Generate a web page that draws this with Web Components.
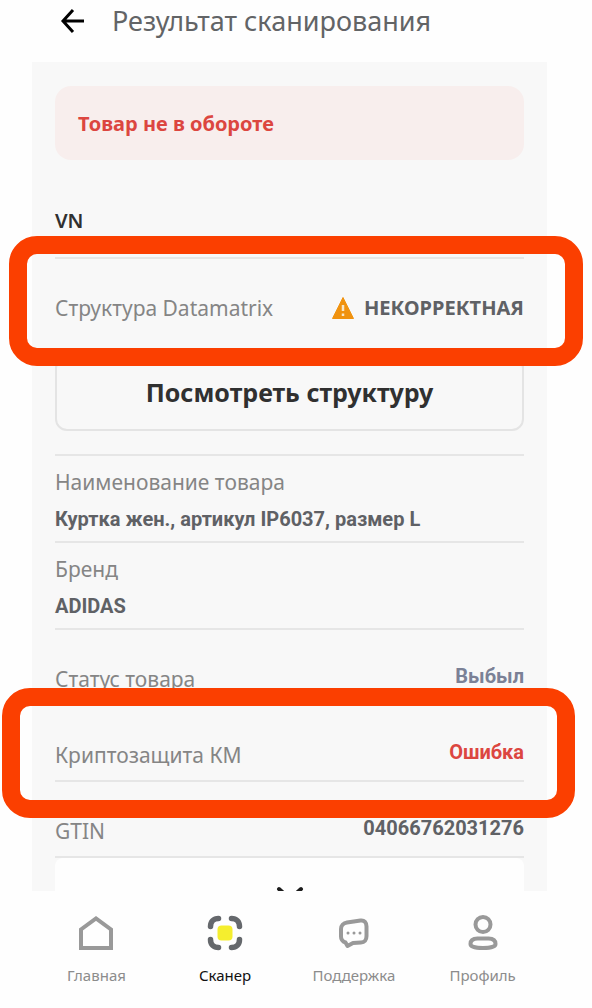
<!DOCTYPE html>
<html lang="ru">
<head>
<meta charset="utf-8">
<meta name="viewport" content="width=device-width, initial-scale=1">
<title>Результат сканирования</title>
<style>
  body {
    margin: 0;
    background: #fefefe;
    font-family: "Noto Sans", "Open Sans", sans-serif;
    --line: #e6e6e6;
    --muted: #858585;
    --strong: #5f6165;
    --danger: #dc4640;
    --accent: #fb3f00;
  }
</style>
</head>
<body>

<scan-page>
  <page-header slot="header">Результат сканирования</page-header>

  <status-alert>Товар не в обороте</status-alert>
  <section-title>VN</section-title>
  <check-row marked>
    Структура Datamatrix
    <warning-icon slot="icon"></warning-icon>
    <span slot="value">НЕКОРРЕКТНАЯ</span>
  </check-row>
  <outline-button>Посмотреть структуру</outline-button>
  <stacked-field>
    Наименование товара
    <span slot="value">Куртка жен., артикул IP6037, размер L</span>
  </stacked-field>
  <stacked-field>
    Бренд
    <span slot="value">ADIDAS</span>
  </stacked-field>
  <info-row tone="slate">Статус товара<span slot="value">Выбыл</span></info-row>
  <info-row tone="danger" marked>Криптозащита КМ<span slot="value">Ошибка</span></info-row>
  <info-row>GTIN<span slot="value">04066762031276</span></info-row>
  <more-button></more-button>

  <tab-bar slot="footer">
    <tab-item>
      <svg slot="icon" width="36" height="36" viewBox="0 0 36 36" fill="none" stroke="#999" stroke-width="4">
        <path d="M3 33V14.500L18 3.500L33 14.500V33Z"/>
      </svg>
      Главная
    </tab-item>
    <tab-item active>
      <svg slot="icon" width="36" height="36" viewBox="0 0 36 36" fill="none" stroke="#65686c" stroke-width="5.500" stroke-linecap="round">
        <path d="M3.500 11.500C3.500 6.500 6.500 3.500 11.500 3.500M24.500 3.500C29.500 3.500 32.500 6.500 32.500 11.500M32.500 24.500C32.500 29.500 29.500 32.500 24.500 32.500M11.500 32.500C6.500 32.500 3.500 29.500 3.500 24.500"/>
        <rect x="10.500" y="10.500" width="15" height="15" rx="4" fill="#f5ee2e" stroke="none"/>
      </svg>
      Сканер
    </tab-item>
    <tab-item>
      <svg slot="icon" width="36" height="36" viewBox="0 0 36 36" fill="none" stroke="#999" stroke-width="4" stroke-linejoin="round">
        <path d="M11 7.500L24.500 5.500C28.500 5 30.500 7.500 30.500 11.500V21C30.500 25 28.500 27.500 25 27.500L17 28L11.500 31L9.500 27.500C6.500 26.500 5 24.500 5 21.500V14C5 10.500 7.500 8 11 7.500Z"/>
        <path d="M12 18h.01M18 18h.01M24 18h.01" stroke-width="3" stroke-linecap="round"/>
      </svg>
      Поддержка
    </tab-item>
    <tab-item>
      <svg slot="icon" width="36" height="36" viewBox="0 0 36 36" fill="none" stroke="#999" stroke-width="4">
        <circle cx="18" cy="9.500" r="7.500"/>
        <path d="M5.500 29C5.500 25.500 8 23.500 12.500 23.500H23.500C28 23.500 30.500 25.500 30.500 29C30.500 31.500 26 33 18 33C10 33 5.500 31.500 5.500 29Z"/>
      </svg>
      Профиль
    </tab-item>
  </tab-bar>
</scan-page>

<script>
function define(name, html) {
  const template = document.createElement("template");
  template.innerHTML = html;

  window.customElements.define(name, class extends HTMLElement {
    constructor() {
      super();
      this.attachShadow({ mode: "open" });
      this.shadowRoot.appendChild(template.content.cloneNode(true));
    }
  });
}

define("scan-page", `
<style>
  :host {
    display: flex;
    flex-direction: column;
    height: 100vh;
    padding: 0 45px 0 32px;
    box-sizing: border-box;
  }
  main {
    flex: 1;
    min-height: 0;
    padding: 24px 23px 0;
    background: #f8f8f8;
    /* the list is cut at the tab bar, the marks may stick out sideways */
    overflow-x: visible;
    overflow-y: clip;
  }
</style>
<slot name="header"></slot>
<main><slot></slot></main>
<slot name="footer"></slot>
`);

define("page-header", `
<style>
  :host {
    display: flex;
    align-items: center;
    gap: 24px;
    height: 42px;
    padding: 0 24px 20px;
  }
  button {
    display: flex;
    padding: 0;
    border: 0;
    background: none;
  }
  h1 {
    margin: 0;
    font-size: 27px;
    line-height: 32px;
    font-weight: 400;
    color: #626466;
    white-space: nowrap;
  }
</style>
<button type="button" aria-label="Назад">
  <svg width="32" height="32" viewBox="0 0 32 32" fill="none" stroke="#000" stroke-width="3">
    <path d="M28 16H7M17 5L7 16L17 27"/>
  </svg>
</button>
<h1><slot></slot></h1>
`);

define("status-alert", `
<style>
  :host {
    display: block;
    padding: 25px 23px 23px;
    border-radius: 16px;
    background: #f8eeed;
    color: var(--danger);
    font-size: 20px;
    line-height: 26px;
    font-weight: 700;
  }
</style>
<slot></slot>
`);

define("section-title", `
<style>
  :host {
    display: block;
    padding: 48px 0 24px;
    border-bottom: 2px solid var(--line);
  }
  h2 {
    margin: 0;
    font-size: 20px;
    line-height: 25px;
    font-weight: 600;
    color: #303030;
  }
</style>
<h2><slot></slot></h2>
`);

define("check-row", `
<style>
  :host {
    display: flex;
    align-items: center;
    position: relative;
    height: 97px;
    font-size: 21px;
    line-height: 26px;
    color: var(--muted);
  }
  .label {
    flex: 1;
  }
  .value {
    display: flex;
    align-items: center;
    gap: 10px;
    font-size: 20px;
    color: var(--strong);
    font-weight: 700;
  }
  .mark {
    display: none;
  }
  :host([marked]) .mark {
    display: block;
    position: absolute;
    inset: -23px -59px -10px -46px;
    z-index: 1;
    border: 18px solid var(--accent);
    border-radius: 28px;
    pointer-events: none;
  }
</style>
<span class="label"><slot></slot></span>
<span class="value"><slot name="icon"></slot><slot name="value"></slot></span>
<span class="mark"></span>
`);

define("warning-icon", `
<style>
  :host {
    display: flex;
  }
</style>
<svg width="22" height="22" viewBox="0 0 22 22">
  <path d="M11 0.500L21.500 21.500H0.500Z" fill="#f0920f" stroke="#f0920f" stroke-linejoin="round"/>
  <path d="M11 8V14M11 16.500V19" stroke="#f8e6c8" stroke-width="2.500"/>
</svg>
`);

define("outline-button", `
<style>
  :host {
    display: block;
    padding-bottom: 23px;
    border-bottom: 2px solid var(--line);
  }
  button {
    width: 100%;
    padding: 19px 20px 21px;
    border: 2px solid #e4e4e4;
    border-radius: 12px;
    background: none;
    font-family: inherit;
    font-size: 25px;
    line-height: 31px;
    font-weight: 700;
    color: #303030;
  }
</style>
<button type="button"><slot></slot></button>
`);

define("stacked-field", `
<style>
  :host {
    display: flex;
    flex-direction: column;
    gap: 11px;
    padding: 13px 0 9px;
    border-bottom: 2px solid var(--line);
    font-size: 21px;
    line-height: 26px;
    color: var(--muted);
  }
  .value {
    font-family: Roboto, sans-serif;
    font-size: 20px;
    font-weight: 700;
    color: var(--strong);
  }
</style>
<span><slot></slot></span>
<span class="value"><slot name="value"></slot></span>
`);

define("info-row", `
<style>
  :host {
    display: flex;
    justify-content: space-between;
    position: relative;
    padding: 33px 0 12px;
    border-bottom: 2px solid var(--line);
    font-size: 21px;
    line-height: 26px;
    color: var(--muted);
  }
  .label {
    padding-top: 3px;
  }
  .value {
    font-family: Roboto, sans-serif;
    font-size: 20px;
    font-weight: 700;
    color: var(--strong);
  }
  :host([tone="slate"]) .value {
    color: #7b8196;
  }
  :host([tone="danger"]) .value {
    color: var(--danger);
  }
  .mark {
    display: none;
  }
  :host([marked]) .mark {
    display: block;
    position: absolute;
    inset: -18px -51px -38px -53px;
    z-index: 1;
    border: 18px solid var(--accent);
    border-radius: 28px;
    pointer-events: none;
  }
</style>
<span class="label"><slot></slot></span>
<span class="value"><slot name="value"></slot></span>
<span class="mark"></span>
`);

define("more-button", `
<style>
  :host {
    display: block;
  }
  button {
    display: flex;
    justify-content: center;
    width: 100%;
    padding: 24px;
    border: 0;
    border-radius: 8px;
    background: #fefefe;
  }
</style>
<button type="button" aria-label="Показать ещё">
  <svg width="32" height="24" viewBox="0 0 32 24" fill="none" stroke="#1c1c1c" stroke-width="4" stroke-linecap="round">
    <path d="M5 7L16 17L27 7"/>
  </svg>
</button>
`);

define("tab-bar", `
<style>
  nav {
    display: grid;
    grid-template-columns: repeat(4, 1fr);
    height: 117px;
  }
</style>
<nav><slot></slot></nav>
`);

define("tab-item", `
<style>
  a {
    display: flex;
    flex-direction: column;
    align-items: center;
    gap: 14px;
    padding-top: 24px;
    font-size: 15px;
    line-height: 20px;
    color: #8c8c8c;
    text-decoration: none;
  }
  :host([active]) a {
    color: #111;
  }
</style>
<a href="#"><slot name="icon"></slot><span><slot></slot></span></a>
`);
</script>
</body>
</html>
